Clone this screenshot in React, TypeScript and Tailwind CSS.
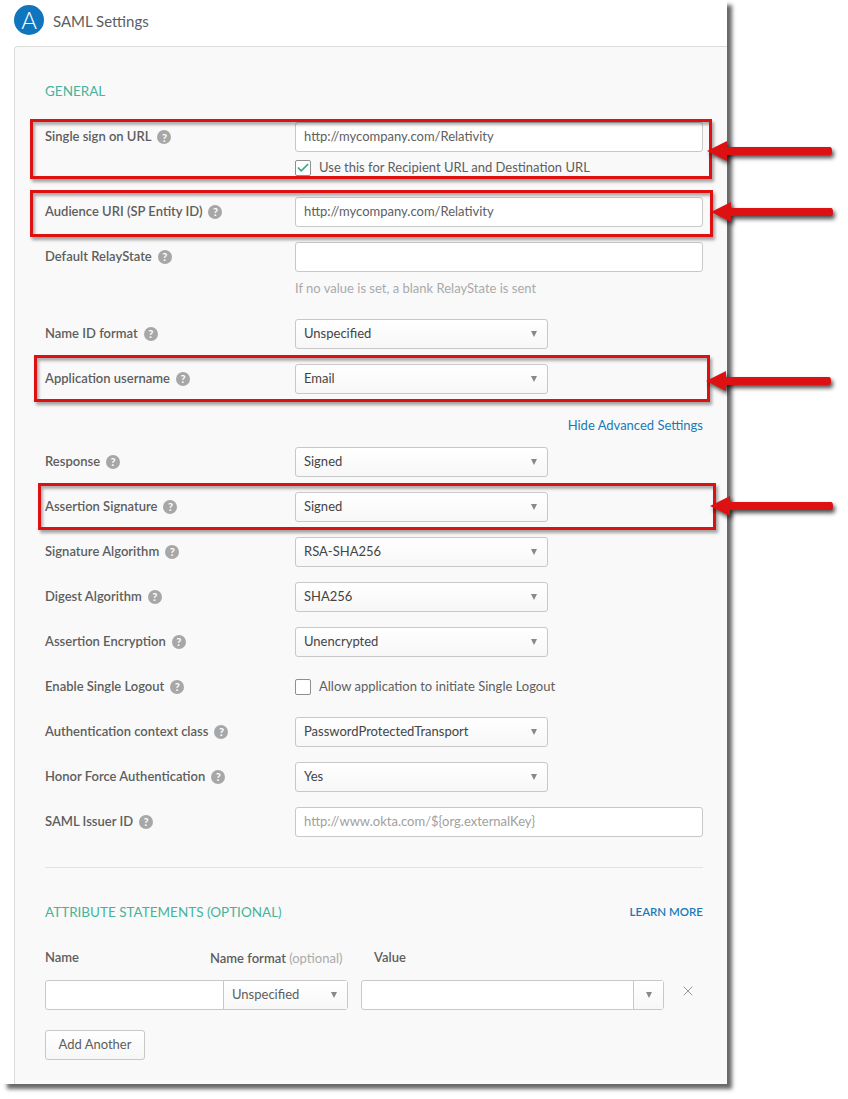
import { Check, X } from "lucide-react"

const font = "font-['Lato','Liberation_Sans',sans-serif]"

function Help() {
  return (
    <span className="ml-[6px] inline-flex h-[14px] w-[14px] shrink-0 items-center justify-center rounded-full bg-[#a7a7a7] text-[11px] font-bold leading-none text-white">
      ?
    </span>
  )
}

function Label({ text }: { text: string }) {
  return (
    <div className="flex h-[30px] w-[250px] shrink-0 items-center text-[13px] font-semibold text-[#5e5e5e]">
      {text}
      <Help />
    </div>
  )
}

function Caret() {
  return <span className="h-0 w-0 border-x-[3.5px] border-t-[6px] border-x-transparent border-t-[#888]" />
}

function Select({ value }: { value: string }) {
  return (
    <div className="flex h-[30px] w-[253px] items-center justify-between rounded-[3px] border border-[#c8c8c8] bg-gradient-to-b from-white to-[#f7f7f7] pl-2 pr-[10px] text-[13px] text-[#444]">
      {value}
      <Caret />
    </div>
  )
}

function Input({ value, placeholder }: { value?: string; placeholder?: boolean }) {
  return (
    <div
      className={`flex h-[30px] w-[408px] items-center rounded-[3px] border border-[#c8c8c8] bg-white pl-2 text-[13px] ${
        placeholder ? "text-[#a0a0a0]" : "text-[#5e5e5e]"
      }`}
    >
      {value}
    </div>
  )
}

function Row({ label, children }: { label: string; children: React.ReactNode }) {
  return (
    <div className="mb-[15px] flex items-start">
      <Label text={label} />
      {children}
    </div>
  )
}

function CheckLine({ text, checked }: { text: string; checked?: boolean }) {
  return (
    <div className="flex items-center text-[13px] text-[#5e5e5e]">
      <span className="mr-2 flex h-4 w-4 items-center justify-center rounded-[2px] border border-[#8f8f8f] bg-white">
        {checked && <Check className="h-[14px] w-[14px] text-[#3fa88a]" strokeWidth={3} />}
      </span>
      {text}
    </div>
  )
}

function RedBox({ className }: { className: string }) {
  return <div className={`absolute border-[3px] border-[#dd1111] shadow-[2px_3px_3px_rgba(0,0,0,0.35),inset_2px_3px_3px_rgba(0,0,0,0.3)] ${className}`} />
}

function Arrow({ className, length }: { className: string; length: number }) {
  return (
    <svg className={`absolute overflow-visible drop-shadow-[2px_3px_2px_rgba(0,0,0,0.7)] ${className}`} width={length} height="22" viewBox={`0 0 ${length} 22`}>
      <path d={`M0 11 L20 1 L20 7 L${length - 2} 7 Q${length} 7 ${length} 11 Q${length} 15 ${length - 2} 15 L20 15 L20 21 Z`} fill="#dd1111" />
    </svg>
  )
}

export default function App() {
  return (
    <div className={`relative h-[1099px] w-[848px] overflow-hidden bg-white ${font}`}>
      <div className="ml-[2px] flex h-[1084px] w-[725px] flex-col bg-white pl-3 shadow-[5px_5px_4px_rgba(0,0,0,0.6)]">
        <div className="flex h-[46px] items-start pt-[5px]">
          <div className="flex h-[30px] w-[30px] items-center justify-center rounded-full bg-[#0f75bc] text-[24px] font-light leading-none text-white">
            A
          </div>
          <div className="ml-[9px] mt-[5px] text-[15px] text-[#5e5e5e]">SAML Settings</div>
        </div>

        <div className="flex-1 rounded-tl-[4px] border-l border-t border-[#dcdcdc] bg-[#f9f9f9] pl-[30px] pr-6">
          <div className="pb-[22px] pt-[35px] text-[13.5px] uppercase leading-[18px] text-[#46b39a]">General</div>

          <div className="mb-[15px] flex items-start">
            <Label text="Single sign on URL" />
            <div>
              <Input value="http://mycompany.com/Relativity" />
              <div className="mt-[6px]">
                <CheckLine checked text="Use this for Recipient URL and Destination URL" />
              </div>
            </div>
          </div>
          <div className="h-[4px]" />
          <Row label="Audience URI (SP Entity ID)">
            <Input value="http://mycompany.com/Relativity" />
          </Row>
          <div className="flex items-start">
            <Label text="Default RelayState" />
            <div>
              <Input />
              <div className="mb-[22px] mt-[8px] text-[13px] leading-[17px] text-[#aaa]">If no value is set, a blank RelayState is sent</div>
            </div>
          </div>
          <Row label="Name ID format">
            <Select value="Unspecified" />
          </Row>
          <Row label="Application username">
            <Select value="Email" />
          </Row>
          <div className="mb-[13px] mt-[22px] text-right text-[13px] leading-[18px] text-[#1a7ab8]">Hide Advanced Settings</div>
          <Row label="Response">
            <Select value="Signed" />
          </Row>
          <Row label="Assertion Signature">
            <Select value="Signed" />
          </Row>
          <Row label="Signature Algorithm">
            <Select value="RSA-SHA256" />
          </Row>
          <Row label="Digest Algorithm">
            <Select value="SHA256" />
          </Row>
          <Row label="Assertion Encryption">
            <Select value="Unencrypted" />
          </Row>
          <Row label="Enable Single Logout">
            <div className="flex h-[30px] items-center">
              <CheckLine text="Allow application to initiate Single Logout" />
            </div>
          </Row>
          <Row label="Authentication context class">
            <Select value="PasswordProtectedTransport" />
          </Row>
          <Row label="Honor Force Authentication">
            <Select value="Yes" />
          </Row>
          <Row label="SAML Issuer ID">
            <Input placeholder value="http://www.okta.com/${org.externalKey}" />
          </Row>

          <div className="mt-[30px] border-t border-[#e2e2e2]" />

          <div className="mt-[35px] flex items-center justify-between leading-[18px]">
            <div className="text-[13.5px] text-[#46b39a]">ATTRIBUTE STATEMENTS (OPTIONAL)</div>
            <div className="text-[11.5px] font-semibold text-[#1a7ab8]">LEARN MORE</div>
          </div>

          <div className="mt-[28px] flex h-[18px] items-center text-[13px] font-semibold text-[#5e5e5e]">
            <div className="w-[165px]">Name</div>
            <div className="w-[164px] pt-[2px]">
              Name format <span className="font-normal text-[#aaa]">(optional)</span>
            </div>
            <div>Value</div>
          </div>

          <div className="mt-[13px] flex items-start">
            <div className="flex h-[30px] w-[303px] rounded-[3px] border border-[#c8c8c8] bg-white">
              <div className="w-[178px] border-r border-[#c8c8c8]" />
              <div className="flex flex-1 items-center justify-between bg-gradient-to-b from-white to-[#f7f7f7] pl-2 pr-[10px] text-[13px] text-[#5e5e5e]">
                Unspecified
                <Caret />
              </div>
            </div>
            <div className="ml-[13px] flex h-[30px] w-[303px] rounded-[3px] border border-[#c8c8c8] bg-white">
              <div className="flex-1" />
              <div className="flex w-[30px] items-center justify-center border-l border-[#c8c8c8] bg-gradient-to-b from-white to-[#f7f7f7]">
                <Caret />
              </div>
            </div>
            <X className="ml-[16px] mt-[3px] h-[16px] w-[16px] text-[#999]" strokeWidth={1.5} />
          </div>

          <button className="mt-[20px] flex h-[30px] w-[100px] items-center justify-center rounded-[3px] border border-[#c8c8c8] bg-gradient-to-b from-white to-[#f7f7f7] text-[13px] text-[#5e5e5e]">
            Add Another
          </button>
        </div>
      </div>

      <RedBox className="left-[30px] top-[119px] h-[60px] w-[682px]" />
      <RedBox className="left-[30px] top-[190px] h-[47px] w-[683px]" />
      <RedBox className="left-[34px] top-[355px] h-[47px] w-[676px]" />
      <RedBox className="left-[38px] top-[483px] h-[47px] w-[678px]" />

      <Arrow className="left-[707px] top-[140px]" length={125} />
      <Arrow className="left-[711px] top-[201px]" length={122} />
      <Arrow className="left-[706px] top-[370px]" length={125} />
      <Arrow className="left-[710px] top-[495px]" length={123} />
    </div>
  )
}
